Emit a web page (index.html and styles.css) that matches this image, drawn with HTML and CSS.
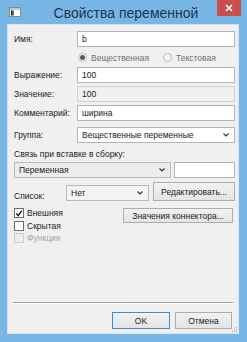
FILE: index.html
```html
<!DOCTYPE html>
<html>
	<head>
		<meta charset="UTF-8">
		<title>Свойства переменной</title>
		<link rel="stylesheet" href="styles.css">
	</head>
	<body>
		<!-- окно диалога -->
		<div class="window">
			<div class="titlebar">
				<span class="app-icon">
					<svg width="12" height="10" viewBox="0 0 12 10">
						<rect x="0.5" y="0.5" width="11" height="9" fill="#fff" stroke="#8a8a8a"/>
						<rect x="1" y="1" width="10" height="2" fill="#b9c9d6"/>
						<rect x="2" y="3.5" width="3" height="5" fill="#3f8a45"/>
						<rect x="2" y="3.5" width="1.2" height="5" fill="#222"/>
					</svg>
				</span>
				<span class="title">Свойства переменной</span>
				<span class="close">
					<svg width="8" height="8" viewBox="0 0 8 8">
						<path d="M1 1 L7 7 M7 1 L1 7" stroke="#fff" stroke-width="1.6"/>
					</svg>
				</span>
			</div>

			<div class="client">
				<div class="row">
					<span class="lbl">Имя:</span>
					<div class="edit">b</div>
				</div>
				<div class="radios">
					<span class="radio checked"></span><span class="radio-text">Вещественная</span>
					<span class="radio"></span><span class="radio-text">Текстовая</span>
				</div>
				<div class="row">
					<span class="lbl">Выражение:</span>
					<div class="edit">100</div>
				</div>
				<div class="row">
					<span class="lbl">Значение:</span>
					<div class="edit readonly">100</div>
				</div>
				<div class="row">
					<span class="lbl">Комментарий:</span>
					<div class="edit">ширина</div>
				</div>
				<div class="row r-group">
					<span class="lbl">Группа:</span>
					<div class="combo white">
						<span class="combo-text">Вещественные переменные</span>
						<svg class="chev" width="6" height="4" viewBox="0 0 6 4"><path d="M0.5 0.5 L3 3 L5.5 0.5" fill="none" stroke="#333" stroke-width="1.1"/></svg>
					</div>
				</div>
				<div class="caption">Связь при вставке в сборку:</div>
				<div class="row">
					<div class="combo c-link">
						<span class="combo-text">Переменная</span>
						<svg class="chev" width="6" height="4" viewBox="0 0 6 4"><path d="M0.5 0.5 L3 3 L5.5 0.5" fill="none" stroke="#333" stroke-width="1.1"/></svg>
					</div>
					<div class="edit e-link"></div>
				</div>
				<div class="row r-list">
					<span class="lbl short">Список:</span>
					<div class="combo c-list">
						<span class="combo-text">Нет</span>
						<svg class="chev" width="6" height="4" viewBox="0 0 6 4"><path d="M0.5 0.5 L3 3 L5.5 0.5" fill="none" stroke="#333" stroke-width="1.1"/></svg>
					</div>
					<div class="btn b-edit">Редактировать...</div>
				</div>
				<div class="lower">
					<div class="checks">
						<div class="check-row">
							<span class="box">
								<svg width="9" height="9" viewBox="0 0 9 9"><path d="M1.5 4.5 L3.6 7 L7.8 1.2" fill="none" stroke="#111" stroke-width="1.5"/></svg>
							</span>
							<span>Внешняя</span>
						</div>
						<div class="check-row">
							<span class="box"></span>
							<span>Скрытая</span>
						</div>
						<div class="check-row disabled">
							<span class="box"></span>
							<span>Функция</span>
						</div>
					</div>
					<div class="btn b-conn">Значения коннектора...</div>
				</div>

				<div class="spacer"></div>
				<div class="sep"></div>
				<div class="footer">
					<div class="btn b-ok">OK</div>
					<div class="btn b-cancel">Отмена</div>
				</div>
				<!-- уголок изменения размера -->
				<svg class="grip" width="7" height="7" viewBox="0 0 7 7">
					<rect x="5" y="1" width="1" height="1" fill="#a0a0a0"/>
					<rect x="3" y="3" width="1" height="1" fill="#a0a0a0"/>
					<rect x="5" y="3" width="1" height="1" fill="#a0a0a0"/>
					<rect x="1" y="5" width="1" height="1" fill="#a0a0a0"/>
					<rect x="3" y="5" width="1" height="1" fill="#a0a0a0"/>
					<rect x="5" y="5" width="1" height="1" fill="#a0a0a0"/>
				</svg>
			</div>
		</div>
	</body>
</html>
```

FILE: styles.css
```css
*{
	margin: 0;
	padding: 0;
	box-sizing: border-box;
}

body{
	font-family: "Liberation Sans", Arial, sans-serif;
	font-size: 8.5px;
	color: #1b1b1b;
	background: #fff;
}

/* рамка окна */
.window{
	width: 247px;
	height: 342px;
	background: #78b7e5;
	padding: 0 8px 8px 7px;
	display: flex;
	flex-direction: column;
}

.titlebar{
	height: 24px;
	display: grid;
	grid-template-columns: 1fr auto 1fr;
}

.app-icon{
	justify-self: start;
	padding: 7px 0 0 2px;
}

.title{
	font-size: 14px;
	color: #1e3550;
	line-height: 26px;
	padding-left: 6px;
}

.close{
	justify-self: end;
	width: 24px;
	height: 16px;
	background: #c7504d;
	display: flex;
	align-items: center;
	justify-content: center;
	margin-right: -2px;
}

/* клиентская часть */
.client{
	flex: 1;
	background: #f0f0f0;
	border: 1px solid #d3e5f5;
	padding: 6px 3px 4px 6px;
	display: flex;
	flex-direction: column;
	position: relative;
}

.row{
	display: flex;
	align-items: center;
	height: 16px;
	margin-bottom: 3px;
}

.lbl{
	width: 63px;
	flex: none;
}

.lbl.short{
	width: 52px;
}

.edit{
	flex: 1;
	height: 16px;
	background: #fff;
	border: 1px solid #b4b4b4;
	padding: 0 4px;
	line-height: 14px;
}

.edit.readonly{
	background: #f0f0f0;
	border-color: #cfcfcf;
}

.radios{
	display: flex;
	align-items: center;
	height: 15px;
	padding-left: 64px;
	margin-bottom: 2px;
	color: #6f6f6f;
}

.radio{
	width: 9px;
	height: 9px;
	border-radius: 50%;
	border: 1px solid #bcbcbc;
	background: #f4f4f4;
	margin-right: 4px;
	display: flex;
	align-items: center;
	justify-content: center;
}

.radio.checked::after{
	content: "";
	width: 5px;
	height: 5px;
	border-radius: 50%;
	background: #5a5a5a;
}

.radio-text{
	margin-right: 14px;
}

.r-group{
	margin-top: 3px;
}

.combo{
	flex: 1;
	height: 16px;
	border: 1px solid #b9b9b9;
	background: #ececec;
	display: flex;
	align-items: center;
	padding: 0 5px 0 4px;
}

.combo.white{
	background: #fff;
	border-color: #b4b4b4;
}

.combo-text{
	flex: 1;
}

.chev{
	flex: none;
}

.caption{
	height: 13px;
	line-height: 13px;
	margin: 2px 0 1px;
}

.c-link{
	flex: none;
	width: 157px;
	margin-right: 3px;
}

.e-link{
	flex: 1;
}

.r-list{
	height: 19px;
	align-items: flex-end;
	margin-top: 1px;
}

.c-list{
	flex: none;
	width: 83px;
	background: #f3f3f3;
	margin-right: 4px;
}

.btn{
	border: 1px solid #adadad;
	background: linear-gradient(#f2f2f2, #e4e4e4);
	display: flex;
	align-items: center;
	justify-content: center;
	text-align: center;
}

.b-edit{
	flex: 1;
	height: 19px;
}

/* флажки и кнопка коннектора */
.lower{
	display: flex;
	justify-content: space-between;
	margin-top: 3px;
	padding-right: 2px;
}

.checks{
	display: flex;
	flex-direction: column;
}

.check-row{
	display: flex;
	align-items: center;
	height: 12.5px;
}

.box{
	width: 10px;
	height: 10px;
	border: 1px solid #6d6d6d;
	background: #fff;
	margin-right: 3px;
	display: flex;
	align-items: center;
	justify-content: center;
}

.check-row.disabled{
	color: #a3a3a3;
}

.check-row.disabled .box{
	border-color: #cdcdcd;
	background: #ececec;
}

.b-conn{
	width: 110px;
	height: 15px;
	margin-top: 1px;
}

.spacer{
	flex: 1;
}

.sep{
	height: 2px;
	background: #a0a0a0;
	border-bottom: 1px solid #fff;
	margin: 0 2px 8px -1px;
}

.footer{
	display: flex;
	justify-content: flex-end;
	gap: 5px;
	padding-right: 3px;
}

.b-ok{
	width: 58px;
	height: 17px;
	border-color: #3c8ed3;
}

.b-cancel{
	width: 57px;
	height: 17px;
}

.grip{
	position: absolute;
	right: 0;
	bottom: 0;
}
```
